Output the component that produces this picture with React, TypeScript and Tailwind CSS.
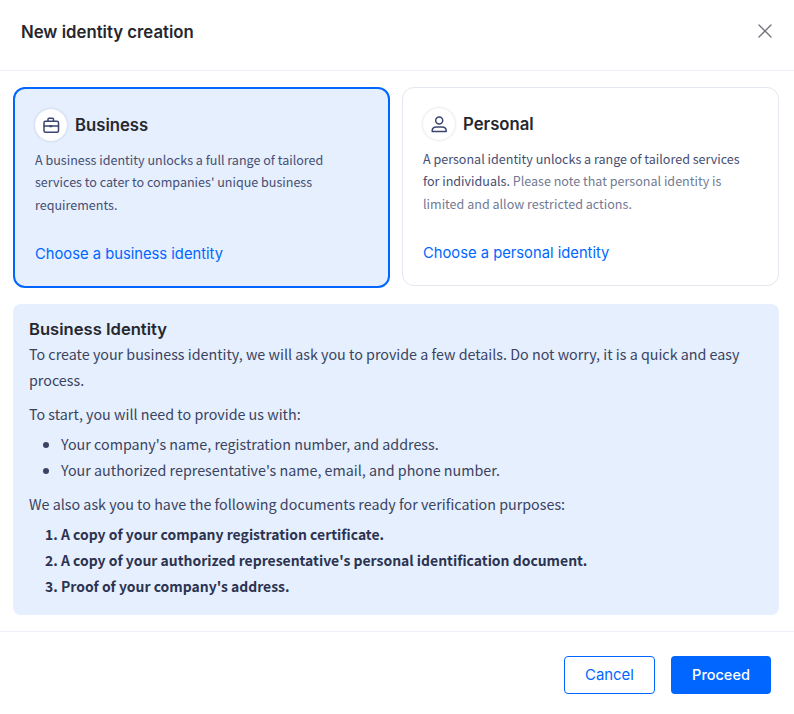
import React from "react";

const heading = "font-['Inter','Liberation_Sans',sans-serif]";
const body = "font-['Noto_Sans_CJK_SC','Noto_Sans',sans-serif]";

function CaseIcon() {
  return (
    <svg width="20" height="20" viewBox="0 0 20 20" fill="none" stroke="#3b4570" strokeWidth="1.5" strokeLinecap="round" strokeLinejoin="round">
      <rect x="3" y="6.25" width="14.5" height="11" rx="1.5" />
      <path d="M7 6.25V4.25a1 1 0 0 1 1-1h3.5a1 1 0 0 1 1 1v2" />
      <path d="M3 11h14.5" />
      <path d="M9 11.2h1.5" strokeWidth="2" />
    </svg>
  );
}

function UserIcon() {
  return (
    <svg width="20" height="20" viewBox="0 0 20 20" fill="none" stroke="#3b4570" strokeWidth="1.5" strokeLinecap="round" strokeLinejoin="round">
      <circle cx="10.2" cy="6.4" r="3.5" />
      <path d="M3.2 17.4v-.7c0-2.4 2-3.8 4.2-3.8h5.6c2.2 0 4.2 1.4 4.2 3.8v.7z" />
    </svg>
  );
}

function Card({
  active,
  icon,
  title,
  children,
  link,
}: {
  active?: boolean;
  icon: React.ReactNode;
  title: string;
  children: React.ReactNode;
  link: string;
}) {
  return (
    <div
      className={
        active
          ? "rounded-xl border-2 border-[#0066ff] bg-[#e5effe] px-5 pt-5 pb-5"
          : "rounded-xl border border-[#e3e7f0] bg-white px-5 pt-5 pb-5"
      }
    >
      <div className="flex items-center gap-2">
        <div className="flex h-8 w-8 items-center justify-center rounded-full bg-white shadow-[0_0_3px_rgba(30,40,80,0.2)]">
          {icon}
        </div>
        <div className={`${heading} text-[16.7px] leading-[32px] font-semibold text-[#26272e]`}>{title}</div>
      </div>
      <div className={`${body} mt-2 h-[66px] text-[12.55px] leading-[22.4px] text-[#454e73]`}>{children}</div>
      <div className={`${heading} mt-[27px] text-[14.75px] leading-[24px] font-normal text-[#0066ff]`}>{link}</div>
    </div>
  );
}

export default function App() {
  return (
    <div className="flex h-[714px] w-[794px] flex-col bg-white">
      <div className="flex h-[71px] items-center justify-between border-b border-[#edf0f6] pr-[21px] pl-[21px]">
        <div className={`${heading} -mt-[4px] text-[16.75px] font-semibold text-[#26272e]`}>New identity creation</div>
        <svg className="-mt-[8px]" width="16" height="16" viewBox="0 0 16 16" fill="none" stroke="#6f727a" strokeWidth="1.3" strokeLinecap="round">
          <path d="M2 2l12 12M14 2L2 14" />
        </svg>
      </div>

      <div className="pt-4 pr-[15px] pl-[13px]">
        <div className="grid grid-cols-2 items-start gap-3">
          <Card active icon={<CaseIcon />} title="Business" link="Choose a business identity">
            A business identity unlocks a full range of tailored services to cater to companies' unique business requirements.
          </Card>
          <Card icon={<UserIcon />} title="Personal" link="Choose a personal identity">
            A personal identity unlocks a range of tailored services for individuals.{" "}
            <span className="text-[#727a94]">Please note that personal identity is limited and allow restricted actions.</span>
          </Card>
        </div>

        <div className={`${body} mt-4 h-[311px] rounded-lg bg-[#e5effe] px-4 pt-[13px] text-[14.3px] leading-[26px] text-[#3a4360]`}>
          <div className={`${heading} text-[16.6px] leading-[24px] font-semibold text-[#26272e]`}>Business Identity</div>
          <p>To create your business identity, we will ask you to provide a few details. Do not worry, it is a quick and easy process.</p>
          <p className="mt-2">To start, you will need to provide us with:</p>
          <ul className="mt-1 list-disc pl-8">
            <li>Your company's name, registration number, and address.</li>
            <li>Your authorized representative's name, email, and phone number.</li>
          </ul>
          <p className="mt-2">We also ask you to have the following documents ready for verification purposes:</p>
          <ol className="mt-1 list-decimal pl-8 text-[13.95px] font-semibold text-[#2c3350]">
            <li>A copy of your company registration certificate.</li>
            <li>A copy of your authorized representative's personal identification document.</li>
            <li>Proof of your company's address.</li>
          </ol>
        </div>
      </div>

      <div className="mt-4 flex h-[83px] justify-end gap-4 border-t border-[#edf0f6] pt-6 pr-[23px]">
        <button className={`${heading} h-[38px] w-[91px] rounded border border-[#0066ff] bg-white text-[14.9px] text-[#0066ff]`}>Cancel</button>
        <button className={`${heading} h-[38px] w-[100px] rounded bg-[#0066ff] text-[14.5px] font-medium text-white`}>Proceed</button>
      </div>
    </div>
  );
}
